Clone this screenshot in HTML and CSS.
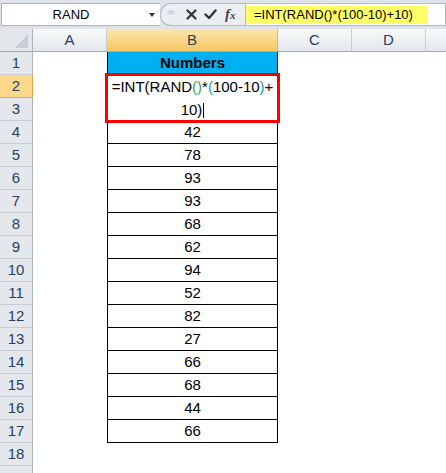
FILE: index.html
```html
<!DOCTYPE html>
<html>
<head>
<meta charset="utf-8">
<link rel="stylesheet" href="styles.css">
</head>
<body>
<div class="fbar">
  <div class="namebox"><span class="nm">RAND</span><span class="arrow"></span></div>
  <div class="tools">
    <span class="knob"></span>
    <svg class="ico x" width="11" height="11" viewBox="0 0 11 11"><path d="M1.5 1.5L9.5 9.5M9.5 1.5L1.5 9.5" stroke="#333" stroke-width="2.2" stroke-linecap="round"/></svg>
    <svg class="ico ok" width="13" height="11" viewBox="0 0 13 11"><path d="M1.5 5.5L5 9L11.5 1.5" fill="none" stroke="#333" stroke-width="2.4" stroke-linecap="round" stroke-linejoin="round"/></svg>
    <span class="fx">f<span class="fxx">x</span></span>
  </div>
  <div class="input"><span class="hl">=INT(RAND()*(100-10)+10)</span></div>
</div>
<div class="sheet">
  <div class="corner"></div>
  <div class="ch">A</div>
  <div class="ch sel">B</div>
  <div class="ch">C</div>
  <div class="ch">D</div>
  <div class="ch last"></div>

  <div class="rh">1</div><div class="b hd">Numbers</div>
  <div class="rh sel">2</div><div class="b m">=INT(RAND<span class="g">()</span>*<span class="t">(</span>100-10<span class="t">)</span>+<br>10)<span class="caret"></span></div>
  <div class="rh">3</div>
  <div class="rh">4</div><div class="b">42</div>
  <div class="rh">5</div><div class="b">78</div>
  <div class="rh">6</div><div class="b">93</div>
  <div class="rh">7</div><div class="b">93</div>
  <div class="rh">8</div><div class="b">68</div>
  <div class="rh">9</div><div class="b">62</div>
  <div class="rh">10</div><div class="b">94</div>
  <div class="rh">11</div><div class="b">52</div>
  <div class="rh">12</div><div class="b">82</div>
  <div class="rh">13</div><div class="b">27</div>
  <div class="rh">14</div><div class="b">66</div>
  <div class="rh">15</div><div class="b">68</div>
  <div class="rh">16</div><div class="b">44</div>
  <div class="rh">17</div><div class="b">66</div>
  <div class="rh">18</div>
  <div class="rh"></div>
</div>
</body>
</html>
```
FILE: styles.css
```css
html, body {
  margin: 0;
  padding: 0;
  background: #fff;
}
body {
  width: 446px;
  height: 473px;
  overflow: hidden;
  font-family: "Liberation Sans", Arial, sans-serif;
}

/* formula bar */
.fbar {
  display: flex;
  height: 29px;
  box-sizing: border-box;
  padding: 3px 0 3px 1px;
  background: #dfe4ea;
}
.namebox {
  width: 159px;
  box-sizing: border-box;
  border: 1px solid #a9b3bf;
  border-right: none;
  background: #fff;
  display: flex;
  align-items: center;
  font-size: 13px;
  color: #000;
}
.nm {
  width: 138px;
  text-align: center;
}
.arrow {
  margin-left: 9px;
  width: 0;
  height: 0;
  border-left: 3.5px solid transparent;
  border-right: 3.5px solid transparent;
  border-top: 4px solid #333;
  margin-top: 1px;
}
.tools {
  width: 85px;
  box-sizing: border-box;
  display: flex;
  align-items: center;
  background: #eceff2;
  border: 1px solid #b3bbc5;
  border-right: none;
  border-radius: 11px 0 0 11px;
}
.knob {
  width: 8px;
  height: 5px;
  border-radius: 50%;
  background: #d3d8de;
  margin-left: 6px;
  margin-top: -4px;
}
.ico.x {
  margin-left: 11px;
}
.ico.ok {
  margin-left: 7px;
}
.fx {
  margin-left: 8px;
  font-family: "Liberation Serif", "Times New Roman", serif;
  font-style: italic;
  font-weight: bold;
  font-size: 15px;
  color: #444;
}
.fxx {
  font-size: 11px;
}
.input {
  flex: 1;
  background: #fff;
  border: 1px solid #b3bbc5;
  box-sizing: border-box;
  display: flex;
  align-items: center;
}
.hl {
  background: #ffff66;
  height: 18px;
  line-height: 18px;
  padding: 0 14px 0 8px;
  font-size: 13px;
  color: #000;
}

/* sheet */
.sheet {
  display: grid;
  grid-template-columns: 33px 74px 171px 74px 74px 20px;
  grid-auto-rows: 23px;
  font-size: 15px;
}
.corner {
  box-sizing: border-box;
  border-right: 1px solid #a9b4c1;
  border-bottom: 1px solid #9eaab7;
  background:
    linear-gradient(to bottom right, transparent 50%, #c8cdd4 50%) no-repeat right 4px bottom 3px / 14px 13px,
    #e3e7ec;
}
.ch {
  box-sizing: border-box;
  background: linear-gradient(#f8f9fb, #e3e7ec);
  border-right: 1px solid #c8cdd4;
  border-bottom: 1px solid #9eaab7;
  color: #27415f;
  text-align: center;
  line-height: 22px;
}
.ch.sel {
  background: linear-gradient(#fce6ac, #f6c764);
  border-bottom-color: #f0a33b;
  border-right-color: #e6b35e;
}
.ch.last {
  border-right: none;
}
.rh {
  grid-column: 1;
  box-sizing: border-box;
  background: #e4e8ed;
  border-bottom: 1px solid #c6ccd3;
  border-right: 1px solid #a9b4c1;
  color: #27415f;
  text-align: center;
  line-height: 22px;
}
.rh.sel {
  background: #f9d88b;
  border-bottom-color: #e6a540;
  border-right-color: #e6a540;
}
.b {
  grid-column: 3;
  box-sizing: border-box;
  border-left: 1px solid #000;
  border-right: 1px solid #000;
  border-bottom: 1px solid #000;
  text-align: center;
  line-height: 22px;
  color: #000;
}
.b.hd {
  background: #00b0f0;
  font-weight: bold;
}
.b.m {
  grid-row: span 2;
  line-height: 23px;
  outline: 3px solid #f00;
  outline-offset: -1px;
}
.g {
  color: #3aa23a;
}
.t {
  color: #26a09a;
}
.caret {
  display: inline-block;
  width: 1px;
  height: 15px;
  background: #000;
  vertical-align: -3px;
  margin-left: 1px;
}
```
